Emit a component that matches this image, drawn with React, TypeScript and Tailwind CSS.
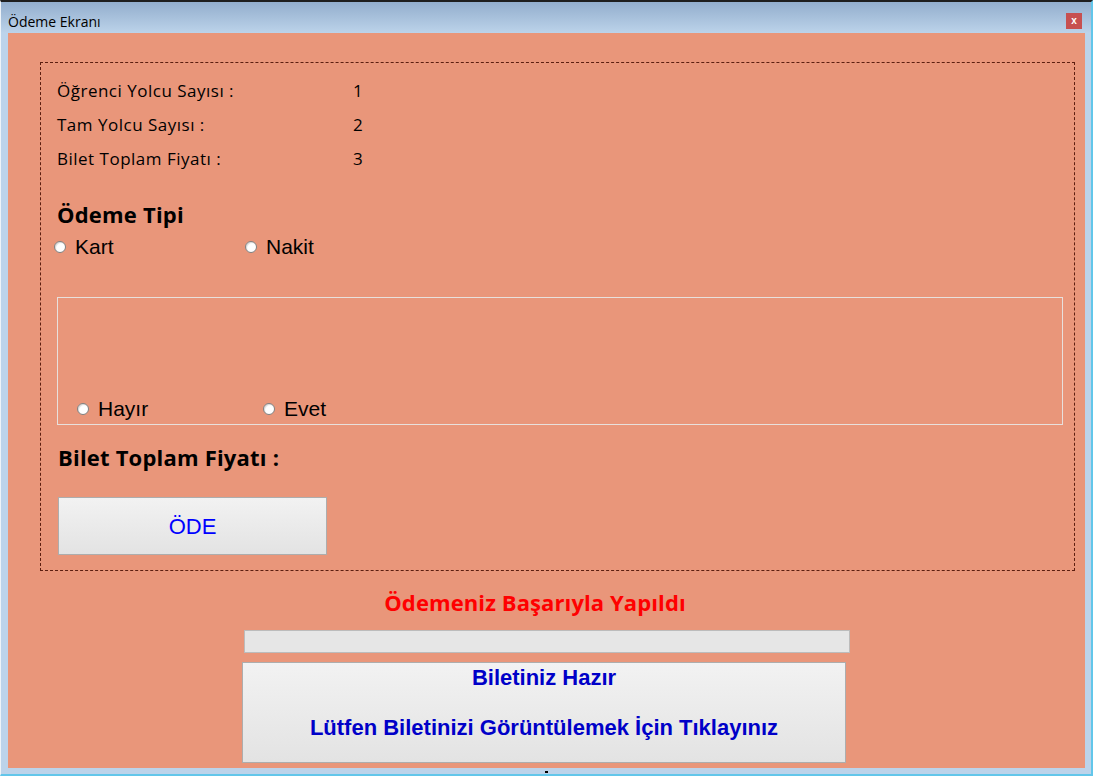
const calibri = { fontFamily: "'Open Sans', Lato, sans-serif" };

const Radio = () => (
  <span className="inline-block w-[12px] h-[12px] rounded-full bg-white border border-[#7f7f7f] shadow-[inset_1px_1px_1px_rgba(0,0,0,0.15)] shrink-0" />
);

const RadioItem = ({ label, className }: { label: string; className?: string }) => (
  <div className={"flex items-center gap-[9px] " + (className || "")}>
    <Radio />
    <span className="text-[21px] leading-[24px] text-black font-['Liberation_Sans',Arial,sans-serif]">
      {label}
    </span>
  </div>
);

const rows = [
  { label: "Öğrenci Yolcu Sayısı :", value: "1" },
  { label: "Tam Yolcu Sayısı :", value: "2" },
  { label: "Bilet Toplam Fiyatı :", value: "3" },
];

export default function App() {
  return (
    <div className="relative w-[1093px] h-[776px] flex flex-col overflow-hidden bg-[#bcd3ea] border-t-2 border-t-[#1e1e1e] border-l border-l-[#eef3f8] border-r-2 border-r-[#62c6ea] border-b-2 border-b-[#62c6ea]">
      {/* title bar */}
      <div className="h-[31px] flex justify-between shrink-0 bg-gradient-to-b from-[#93aecd] to-[#bcd3ea]">
        <span className="pl-[7px] pt-[11px] text-[14px] leading-[17px] text-black font-['Open_Sans',sans-serif]">
          Ödeme Ekranı
        </span>
        <div className="mt-[11px] mr-[9px] w-[16px] h-[16px] bg-[#c75050] flex items-center justify-center text-white text-[10px] font-bold leading-none font-['Liberation_Sans',sans-serif]">
          x
        </div>
      </div>

      {/* content */}
      <div className="flex-1 ml-[7px] mr-[6px] mb-[6px] bg-[#e9967a] flex flex-col px-[32px] pt-[29px]">
        <div className="w-[1035px] h-[509px] border border-dashed border-[#5c1e10] flex flex-col pt-[11px] shrink-0">
          {rows.map((r) => (
            <div key={r.label} className="flex items-center h-[34px] pl-[16px] text-[17px] tracking-[0.5px] text-black" style={calibri}>
              <span className="w-[296px]">{r.label}</span>
              <span>{r.value}</span>
            </div>
          ))}

          <div className="mt-[24px] h-[28px] leading-[28px] pl-[16px] text-[22px] tracking-[0.2px] font-bold text-black" style={calibri}>
            Ödeme Tipi
          </div>

          <div className="mt-[7px] h-[24px] pl-[13px] flex items-center">
            <RadioItem label="Kart" className="w-[191px]" />
            <RadioItem label="Nakit" />
          </div>

          <div className="mt-[38px] ml-[16px] w-[1006px] h-[128px] border border-[#e8e0dc] flex items-end pb-[3px] pl-[19px]">
            <div className="h-[24px] flex items-center">
              <RadioItem label="Hayır" className="w-[186px]" />
              <RadioItem label="Evet" />
            </div>
          </div>

          <div className="mt-[18px] h-[28px] leading-[28px] pl-[17px] text-[22px] tracking-[0.2px] font-bold text-black" style={calibri}>
            Bilet Toplam Fiyatı :
          </div>

          <button className="mt-[26px] ml-[17px] w-[269px] h-[58px] border border-[#adadad] bg-gradient-to-b from-[#f2f2f2] to-[#e3e3e3] flex items-center justify-center text-[22px] text-[#0000ff] font-['Liberation_Sans',Arial,sans-serif]">
            ÖDE
          </button>
        </div>

        <div className="mt-[17px] h-[28px] leading-[28px] w-[604px] ml-[193px] text-center text-[22px] tracking-[0.1px] font-bold text-[#ff0000]" style={calibri}>
          Ödemeniz Başarıyla Yapıldı
        </div>

        <div className="mt-[14px] ml-[204px] w-[606px] h-[23px] bg-[#e6e6e6] border border-[#bcbcbc]" />

        <button className="mt-[9px] ml-[202px] w-[604px] h-[101px] border border-[#adadad] bg-gradient-to-b from-[#f2f2f2] to-[#e3e3e3] flex flex-col items-center pt-[2px] text-[22px] font-bold text-[#0000c8] font-['Liberation_Sans',Arial,sans-serif]">
          <span className="leading-[26px]">Biletiniz Hazır</span>
          <span className="leading-[26px] mt-[24px]">Lütfen Biletinizi Görüntülemek İçin Tıklayınız</span>
        </button>
      </div>

      <span className="absolute left-[544px] bottom-[1px] w-[3px] h-[2px] bg-black" />
      <span className="absolute right-[-2px] top-[385px] w-[2px] h-[5px] bg-black" />
    </div>
  );
}
